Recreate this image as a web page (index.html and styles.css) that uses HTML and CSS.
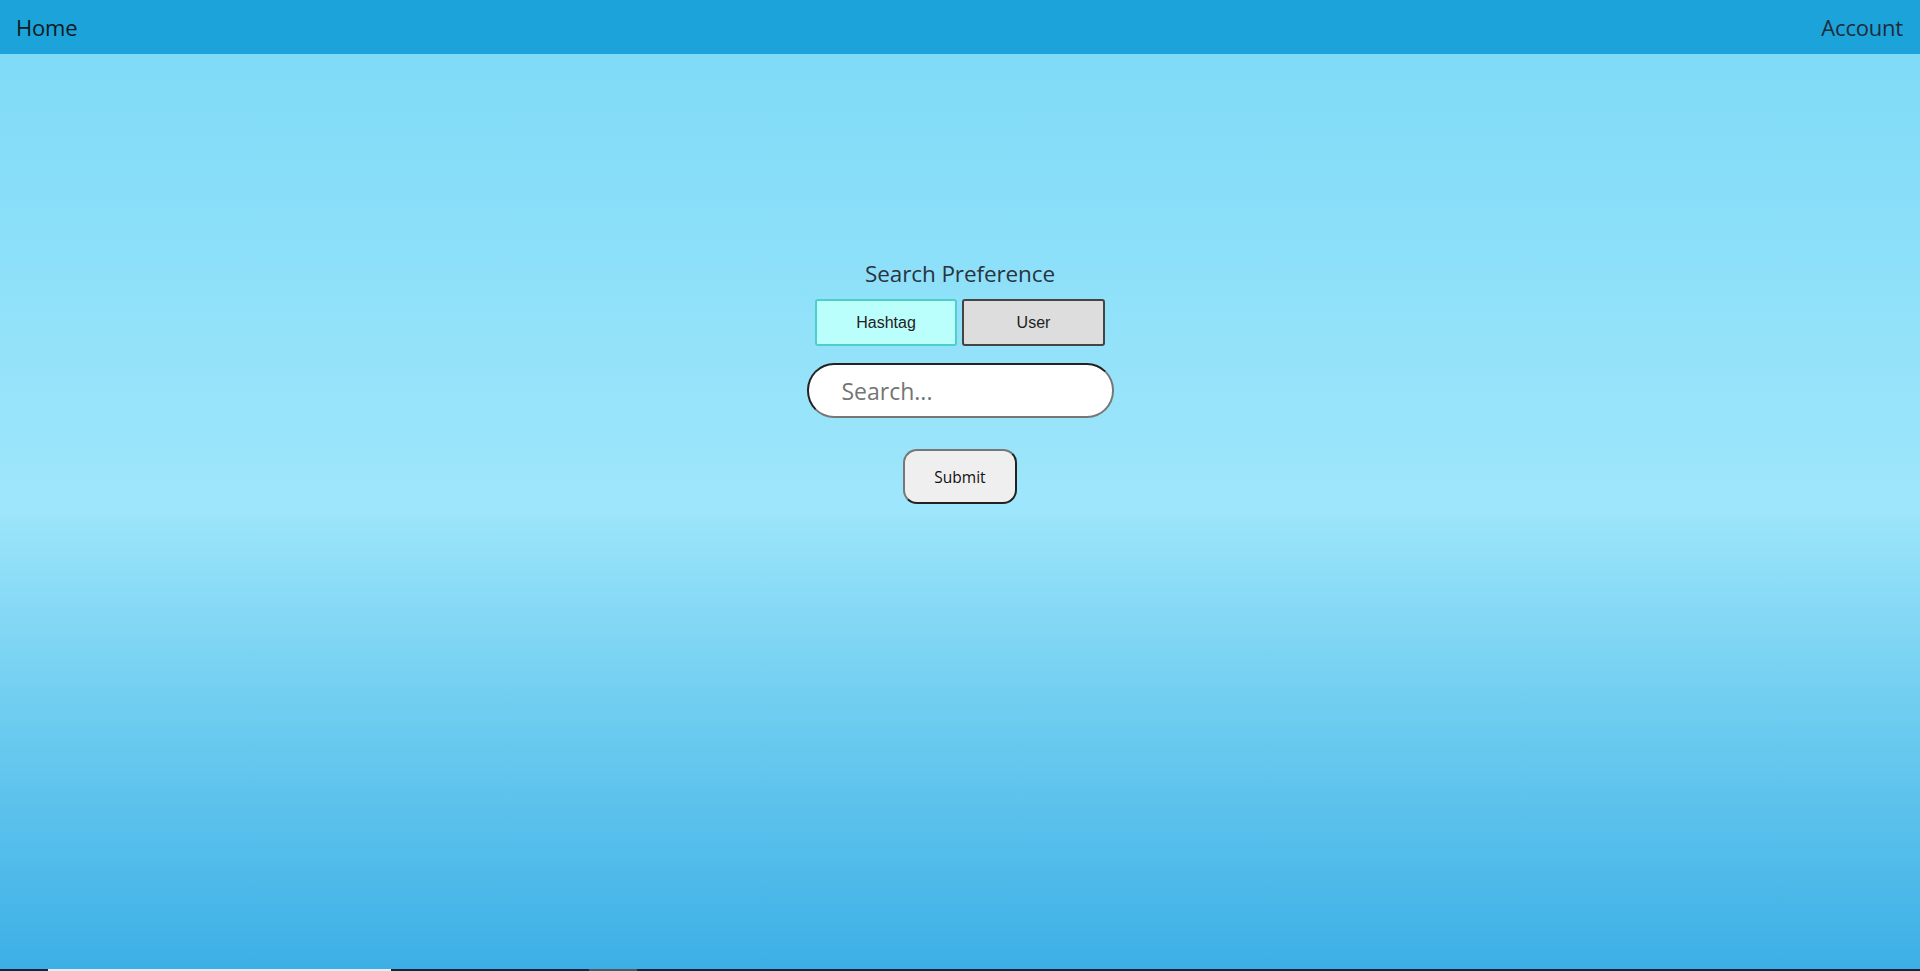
FILE: index.html
```html
<!DOCTYPE html>
<html lang="en">
<head>
<meta charset="utf-8">
<title>Search</title>
<link rel="stylesheet" href="styles.css">
</head>
<body>
<div class="page">
  <header class="topbar">
    <a class="nav-link home" href="#">Home</a>
    <a class="nav-link account" href="#">Account</a>
  </header>
  <main class="content">
    <div class="search-box">
      <h2 class="title">Search Preference</h2>
      <div class="toggle">
        <button class="pref active" type="button">Hashtag</button>
        <button class="pref" type="button">User</button>
      </div>
      <input class="search-input" type="text" placeholder="Search...">
      <button class="submit" type="button">Submit</button>
    </div>
  </main>
  <div class="strip">
    <span class="seg dark s1"></span>
    <span class="seg light s2"></span>
    <span class="seg dark s3"></span>
    <span class="seg gray s4"></span>
    <span class="seg dark s5"></span>
  </div>
</div>
</body>
</html>
```
FILE: styles.css
```css
html, body {
  margin: 0;
  padding: 0;
  height: 100%;
}
body {
  font-family: "Open Sans", "Noto Sans", sans-serif;
  overflow: hidden;
}
.page {
  height: 100vh;
  display: flex;
  flex-direction: column;
  background: linear-gradient(#7bd9f7 0%, #9ee6fb 52%, #6fcdf0 73%, #3cafe6 100%);
}
.topbar {
  height: 54px;
  flex: 0 0 54px;
  background: #1ca3da;
  display: flex;
  align-items: center;
  justify-content: space-between;
  padding: 0 17px 0 16px;
}
.nav-link {
  font-size: 22px;
  text-decoration: none;
  letter-spacing: -0.2px;
}
.home { color: #0d1a22; }
.account { color: #1e2c3a; }
.content {
  flex: 1;
  display: flex;
  justify-content: center;
}
.search-box {
  display: flex;
  flex-direction: column;
  align-items: center;
  padding-top: 205px;
}
.title {
  margin: 0;
  font-weight: 400;
  font-size: 22.5px;
  line-height: 30px;
  color: #2a3340;
  letter-spacing: -0.1px;
}
.toggle {
  display: flex;
  gap: 5px;
  margin-top: 10px;
}
.pref {
  width: 143px;
  height: 47px;
  border-radius: 3px;
  border: 2px solid #444;
  background: #dddddd;
  font-family: "Liberation Sans", Arial, sans-serif;
  font-size: 16px;
  color: #222;
  padding: 0;
}
.pref.active {
  width: 142px;
  border-color: #4ecfc8;
  background: #bbfffc;
}
.search-input {
  box-sizing: border-box;
  margin-top: 17px;
  width: 307px;
  height: 55px;
  border: 2px solid;
  border-color: #222 #777 #777 #222;
  border-radius: 27px;
  background: #fff;
  padding: 0 16px 0 33px;
  font-family: "Open Sans", "Noto Sans", sans-serif;
  font-size: 23px;
  color: #222;
  outline: none;
}
.search-input::placeholder {
  color: #757575;
}
.submit {
  box-sizing: border-box;
  margin-top: 31px;
  width: 114px;
  height: 55px;
  border: 2px solid;
  border-color: #777 #222 #222 #777;
  border-radius: 14px;
  background: #efefef;
  font-family: "Open Sans", "Noto Sans", sans-serif;
  font-size: 15.5px;
  color: #111;
  padding: 0;
}
.strip {
  flex: 0 0 2px;
  display: flex;
}
.seg { height: 2px; }
.dark { background: #14263a; }
.light { background: #e8ecef; }
.gray { background: #4a5866; }
.s1 { width: 48px; }
.s2 { width: 343px; }
.s3 { width: 198px; }
.s4 { width: 48px; }
.s5 { flex: 1; }
```
